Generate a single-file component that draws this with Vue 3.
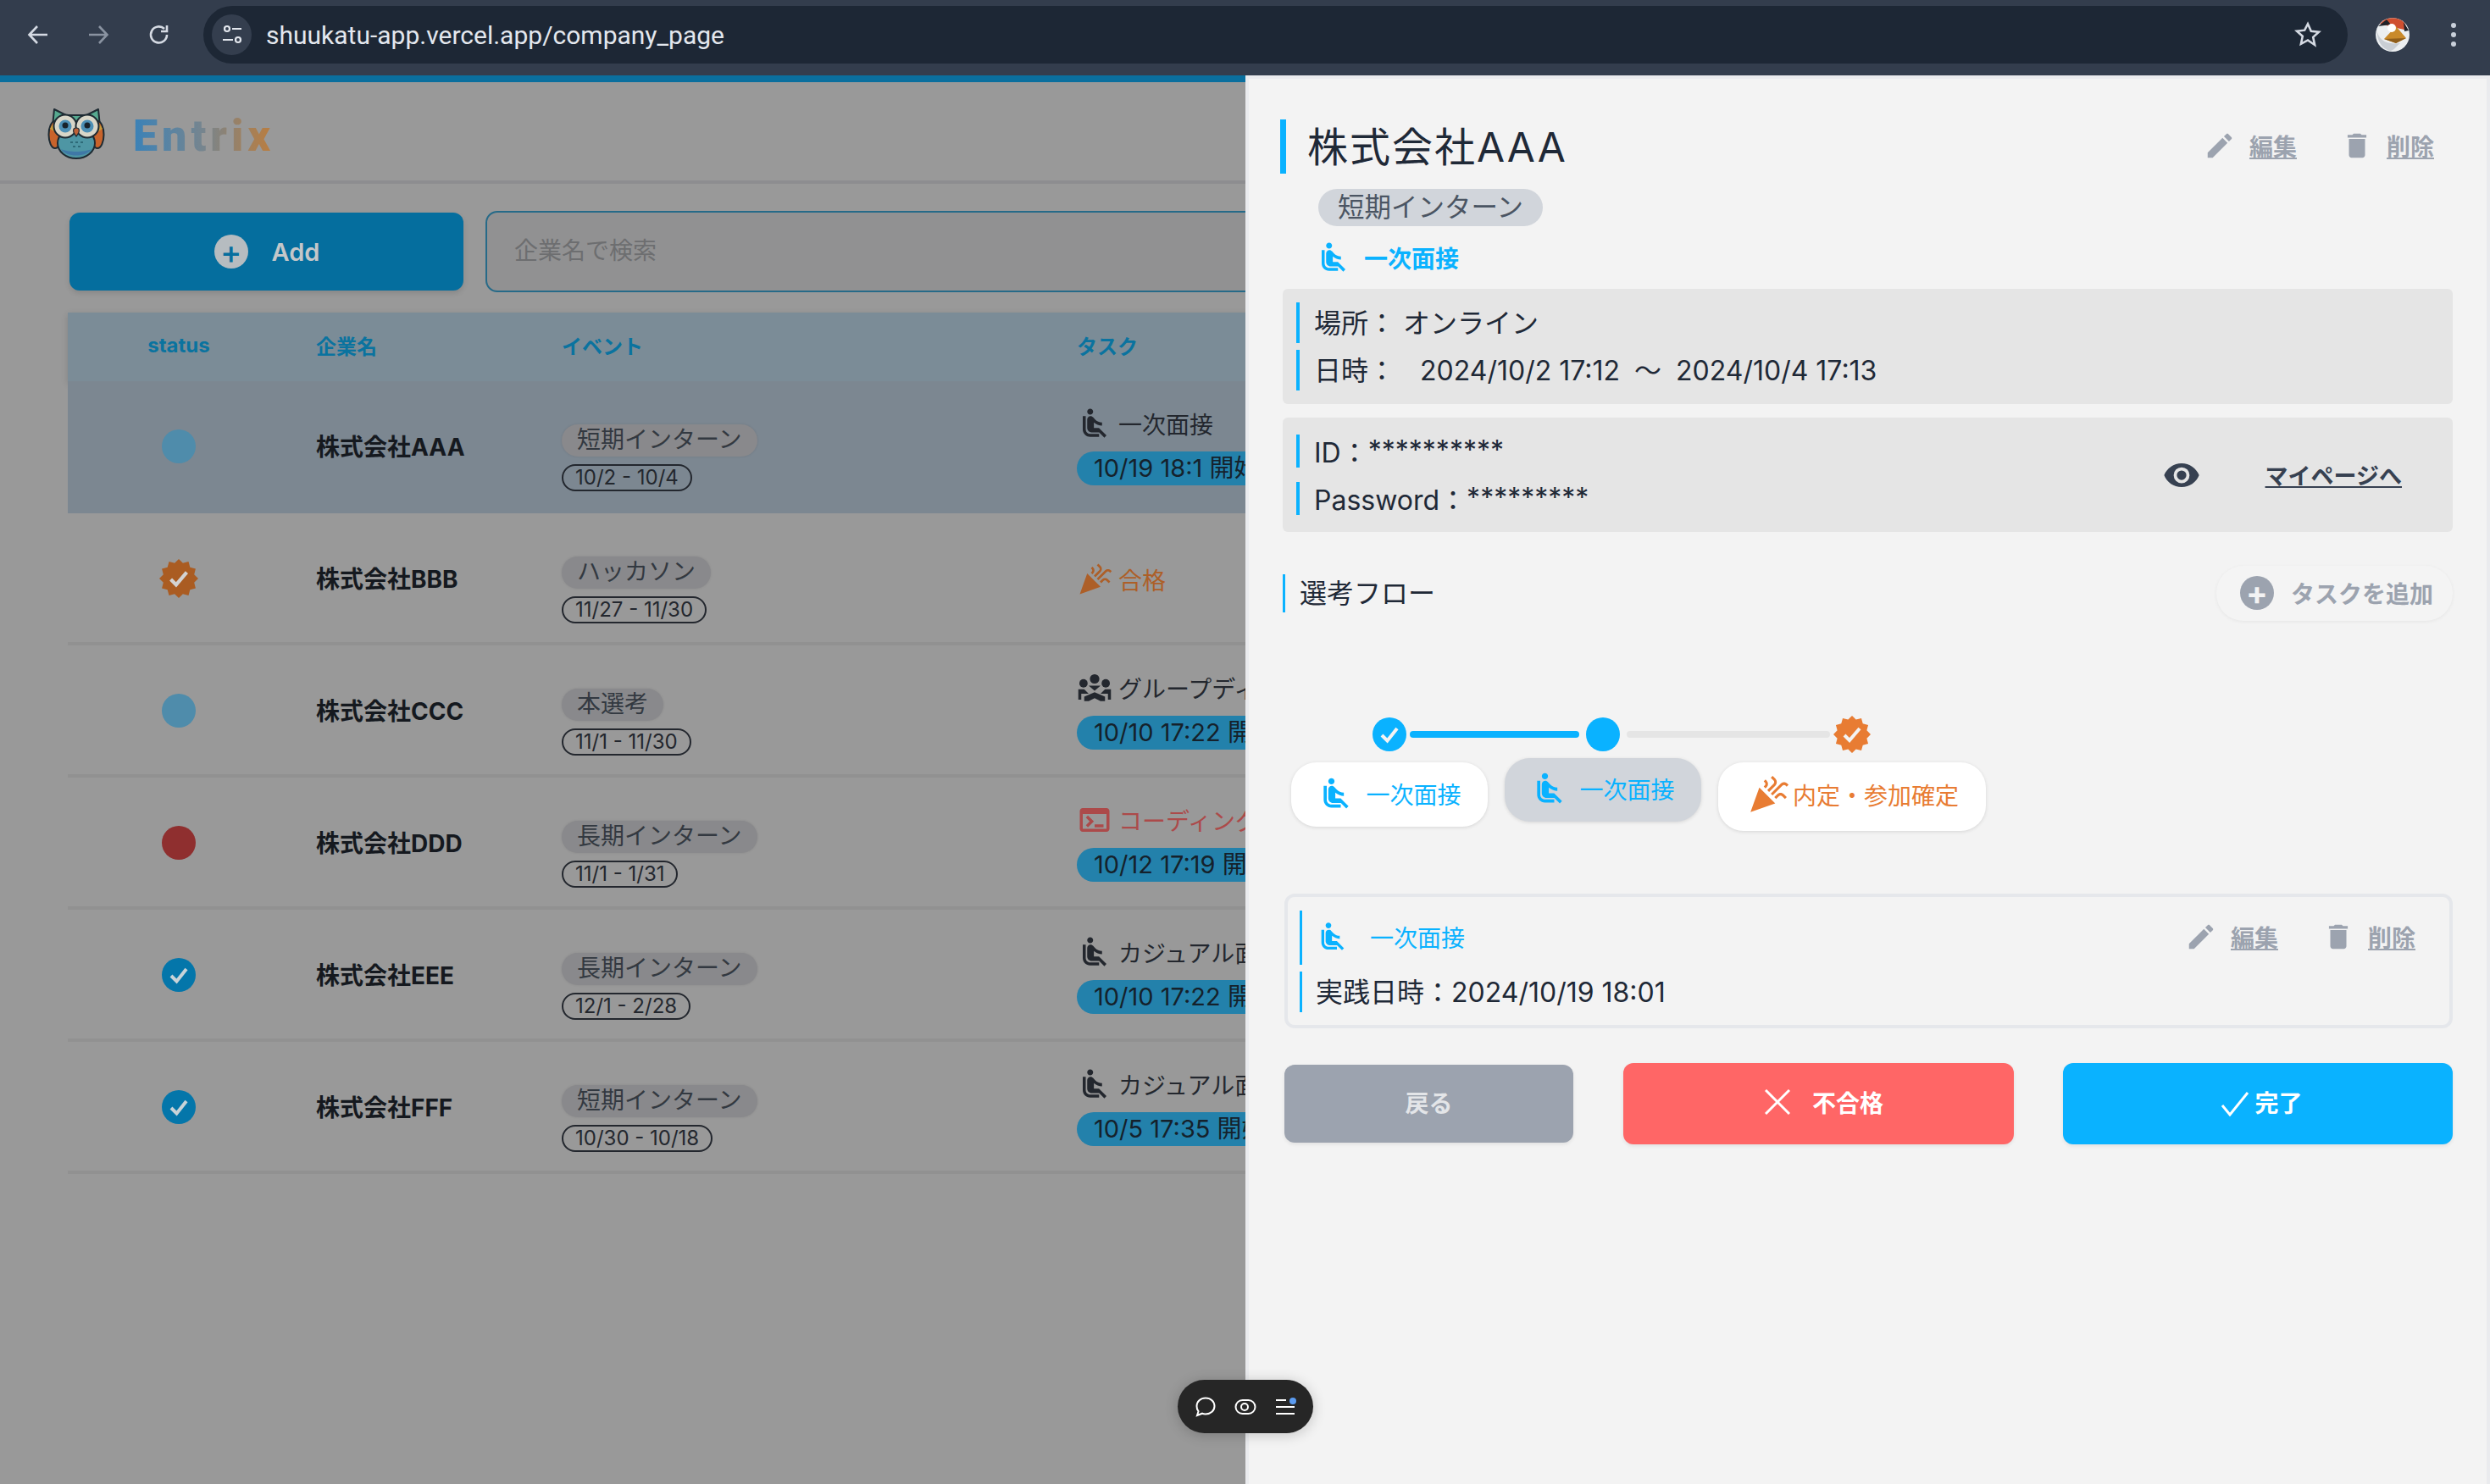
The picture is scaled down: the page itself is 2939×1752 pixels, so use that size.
<template>
  <div class="app">
    <!-- browser bar -->
    <div class="chrome">
      <svg class="nav" viewBox="0 0 26 26" fill="none" stroke="#d5dae3" stroke-width="2.6"><path d="M24 13H3M12 3 2.5 13 12 23" /></svg>
      <svg class="nav forward" viewBox="0 0 26 26" fill="none" stroke="#8a93a1" stroke-width="2.6"><path d="M2 13h21M14 3l9.5 10L14 23" /></svg>
      <svg class="nav reload" viewBox="0 0 26 26" fill="none" stroke="#d5dae3" stroke-width="2.6"><path d="M22 13a9.5 9.5 0 1 1-3-7" /><path d="M22 2v7h-7" /></svg>
      <div class="url-bar">
        <div class="site-icon">
          <svg viewBox="0 0 26 26" fill="none" stroke="#e3e7ee" stroke-width="2.2"><circle cx="7" cy="6" r="3" /><path d="M13 6h11M2 19h12" /><circle cx="20" cy="19" r="3" /></svg>
        </div>
        <span class="url">shuukatu-app.vercel.app/company_page</span>
        <svg class="star" viewBox="0 0 30 30" fill="none" stroke="#d5dae3" stroke-width="2.4"><path d="m15 3 3.6 8 8.6.9-6.4 5.8 1.8 8.5L15 21l-7.6 4.2 1.8-8.5-6.4-5.8 8.6-.9z" /></svg>
      </div>
      <svg class="avatar" viewBox="0 0 40 40">
        <circle cx="20" cy="20" r="20" fill="#eceff1" />
        <path d="M5 7a20 20 0 0 1 29 -1l4 9-13-3z" fill="#cf4f30" />
        <path d="M3 10 13 2l5 6zM33 5l6 10-5 1z" fill="#20232a" />
        <path d="M10 25 24 10l12 14-12 6z" fill="#c98a2b" />
        <path d="M10 25l26-1-12 6z" fill="#8f5e1c" />
        <circle cx="19" cy="12" r="5" fill="#fff" />
        <path d="M1 14c3 12 10 18 28 16-6 5-8 9-12 9C9 37 2 30 1 14z" fill="#c9ced4" />
      </svg>
      <div class="dots"><i></i><i></i><i></i></div>
    </div>

    <div class="body">
      <!-- dimmed company list -->
      <main class="page">
        <header class="brand">
          <svg class="owl" viewBox="0 0 68 62">
            <path d="M8 3 22 10h24l14-7 2 20H6z" fill="#56a98f" stroke="#1e2b33" stroke-width="2" stroke-linejoin="round" />
            <ellipse cx="9" cy="33" rx="7.5" ry="16" fill="#c8632b" stroke="#1e2b33" stroke-width="2" />
            <ellipse cx="59" cy="33" rx="7.5" ry="16" fill="#c8632b" stroke="#1e2b33" stroke-width="2" />
            <path d="M3 26c3-6 6-7 8-6l1 12zM65 26c-3-6-6-7-8-6l-1 12z" fill="#c79a3a" />
            <ellipse cx="34" cy="43" rx="22" ry="18" fill="#4e96a4" stroke="#1e2b33" stroke-width="2" />
            <path d="M16 50c6 10 30 10 36 0-8 4-28 4-36 0z" fill="#3f78a6" />
            <circle cx="21" cy="23" r="13.500" fill="#d8d6c8" stroke="#1e2b33" stroke-width="2" />
            <circle cx="47" cy="23" r="13.500" fill="#d8d6c8" stroke="#1e2b33" stroke-width="2" />
            <circle cx="21" cy="23" r="7.500" fill="#4c8fb5" />
            <circle cx="47" cy="23" r="7.500" fill="#4c8fb5" />
            <circle cx="21" cy="22" r="3.500" fill="#18222b" />
            <circle cx="47" cy="22" r="3.500" fill="#18222b" />
            <path d="M34 25c4 0 5 4 0 10-5-6-4-10 0-10z" fill="#bf6136" stroke="#1e2b33" stroke-width="1.2" />
            <path d="M27 42h3M33 42h3M39 42h3M30 47h3M36 47h3" stroke="#2d6a78" stroke-width="2" />
          </svg>
          <span class="logo-text">Entrix</span>
        </header>

        <div class="toolbar">
          <button class="add-btn">
            <span class="add-plus">+</span>
            <span>Add</span>
          </button>
          <input class="search" placeholder="企業名で検索" />
        </div>

        <section class="table">
          <div class="row head">
            <span class="status-label">status</span>
            <span class="with-pad">企業名</span>
            <span>イベント</span>
            <span>タスク</span>
          </div>
          <div v-for="item in companies" :key="item.name" class="row item" :class="{ selected: item.selected }">
            <div class="status-cell">
              <span v-if="item.status === 'open'" class="dot open"></span>
              <span v-else-if="item.status === 'fail'" class="dot fail"></span>
              <svg v-else-if="item.status === 'done'" class="mark" viewBox="0 0 40 40">
                <circle cx="20" cy="20" r="20" fill="#0476aa" />
                <path d="m11 21 6.5 6.5L29 13" fill="none" stroke="#c8d3d8" stroke-width="4" />
              </svg>
              <svg v-else class="mark seal" viewBox="0 0 44 44">
                <polygon :points="badgePoints" fill="#aa5c22" />
                <path d="m13 23 6 6 12-14" fill="none" stroke="#d3d3d3" stroke-width="4" />
              </svg>
            </div>
            <div class="company with-pad">{{ item.name }}</div>
            <div class="event">
              <span class="event-tag">{{ item.event }}</span>
              <span class="date-pill">{{ item.date }}</span>
            </div>
            <div class="task">
              <div class="task-name" :class="item.tone">
                <svg class="task-icon" viewBox="0 0 24 24" fill="currentColor">
                  <g v-if="item.icon === 'groups'">
                    <circle cx="12" cy="6" r="3.2" /><circle cx="4.5" cy="9" r="2.8" /><circle cx="19.5" cy="9" r="2.8" />
                    <path d="M8 10.5h8L12 14zM1 13h4l3 3H3v4H1zM23 13h-4l-3 3h5v4h2zM5 21v-3l7-3 7 3v3h-3l-4-2-4 2z" />
                  </g>
                  <path v-else :d="icons[item.icon]" />
                </svg>
                <span>{{ item.task }}</span>
              </div>
              <span v-if="item.start" class="start-pill">{{ item.start }}</span>
            </div>
          </div>
        </section>
      </main>

      <!-- detail drawer -->
      <aside class="panel">
        <div class="title-row">
          <h1 class="title">株式会社AAA</h1>
          <div class="actions">
            <a class="action"><svg viewBox="0 0 24 24" fill="currentColor"><path :d="icons.edit" /></svg><span>編集</span></a>
            <a class="action"><svg viewBox="0 0 24 24" fill="currentColor"><path :d="icons.trash" /></svg><span>削除</span></a>
          </div>
        </div>
        <div class="panel-tag">短期インターン</div>
        <div class="current-task">
          <svg viewBox="0 0 24 24" fill="currentColor"><path :d="icons.seat" /></svg>
          <span>一次面接</span>
        </div>

        <div class="info-box">
          <div class="info-line">場所： <span class="online">オンライン</span></div>
          <div class="info-line">日時： <span class="period">2024/10/2 17:12<span class="tilde">～</span>2024/10/4 17:13</span></div>
        </div>

        <div class="info-box account">
          <div class="account-lines">
            <div class="info-line slim">ID：<span class="stars">**********</span></div>
            <div class="info-line slim">Password：<span class="stars">*********</span></div>
          </div>
          <svg class="eye" viewBox="0 0 24 16" fill="currentColor"><path d="M12 .5C7 .5 2.7 3.6 1 8c1.700 4.400 6 7.500 11 7.500s9.300-3.100 11-7.500C21.300 3.600 17 .5 12 .5zM12 13a5 5 0 1 1 0-10 5 5 0 0 1 0 10zm0-8a3 3 0 1 0 0 6 3 3 0 0 0 0-6z" /></svg>
          <a class="mypage">マイページへ</a>
        </div>

        <div class="flow-head">
          <div class="flow-title">選考フロー</div>
          <button class="add-task">
            <span class="task-plus">+</span>
            <span>タスクを追加</span>
          </button>
        </div>

        <div class="track">
          <svg class="step-mark" viewBox="0 0 40 40">
            <circle cx="20" cy="20" r="20" fill="#0ab2ff" />
            <path d="m11 21 6.500 6.500L29 13" fill="none" stroke="#f3f3f3" stroke-width="4" />
          </svg>
          <span class="line active"></span>
          <span class="step-dot"></span>
          <span class="line"></span>
          <svg class="step-badge" viewBox="0 0 44 44">
            <polygon :points="badgePoints" fill="#e87c33" />
            <path d="m13 23 6 6 12-14" fill="none" stroke="#f3f3f3" stroke-width="4" />
          </svg>
        </div>

        <div class="steps">
          <div class="step">
            <svg viewBox="0 0 24 24" fill="currentColor"><path :d="icons.seat" /></svg>
            <span>一次面接</span>
          </div>
          <div class="step current">
            <svg viewBox="0 0 24 24" fill="currentColor"><path :d="icons.seat" /></svg>
            <span>一次面接</span>
          </div>
          <div class="step goal">
            <svg viewBox="0 0 24 24" fill="currentColor"><path :d="icons.party" /></svg>
            <span>内定・参加確定</span>
          </div>
        </div>

        <div class="task-card">
          <div class="card-line top">
            <svg class="card-seat" viewBox="0 0 24 24" fill="currentColor"><path :d="icons.seat" /></svg>
            <span class="card-name">一次面接</span>
            <div class="actions small">
              <a class="action"><svg viewBox="0 0 24 24" fill="currentColor"><path :d="icons.edit" /></svg><span>編集</span></a>
              <a class="action"><svg viewBox="0 0 24 24" fill="currentColor"><path :d="icons.trash" /></svg><span>削除</span></a>
            </div>
          </div>
          <div class="card-line">実践日時：2024/10/19 18:01</div>
        </div>

        <div class="buttons">
          <button class="btn back">戻る</button>
          <button class="btn fail">
            <svg viewBox="0 0 30 30" fill="none" stroke="#fff" stroke-width="3"><path d="m1 1 28 28M29 1 1 29" /></svg>
            <span>不合格</span>
          </button>
          <button class="btn done">
            <svg viewBox="0 0 36 30" fill="none" stroke="#fff" stroke-width="3"><path d="m3 17 9 11L33 2" /></svg>
            <span>完了</span>
          </button>
        </div>
      </aside>

      <!-- floating dev toolbar -->
      <div class="dev-bar">
        <svg viewBox="0 0 26 26" fill="none" stroke="#fff" stroke-width="2"><path d="M13 2.500c6 0 10.500 4 10.500 9.500S19 21.500 13 21.500c-1.500 0-3-.3-4-.8L3 23l1.500-4.800A9.600 9.600 0 0 1 2.500 12C2.500 6.500 7 2.500 13 2.500z" /></svg>
        <svg viewBox="0 0 26 26" fill="none" stroke="#fff" stroke-width="2"><rect x="1.500" y="5" width="23" height="16" rx="8" /><circle cx="12" cy="13" r="4" /></svg>
        <div class="menu-icon">
          <svg viewBox="0 0 26 26" fill="none" stroke="#fff" stroke-width="2"><path d="M2 5h12M2 13h22M2 21h22" /></svg>
          <i></i>
        </div>
      </div>
    </div>
  </div>
</template>

<script setup>
const icons = {
  seat: 'M7.59 5.41c-.78-.78-.78-2.05 0-2.83.78-.78 2.05-.78 2.83 0 .78.78.78 2.05 0 2.83-.79.79-2.05.79-2.83 0zM6 16V7H4v9c0 2.76 2.24 5 5 5h6v-2H9c-1.66 0-3-1.34-3-3zm14 4.07L14.93 15H11.5v-3.68c1.4 1.15 3.6 2.16 5.5 2.16v-2.16c-1.66.02-3.61-.87-4.67-2.04l-1.4-1.55c-.19-.21-.43-.38-.69-.5-.29-.14-.62-.23-.96-.23h-.03C8.01 7 7 8.01 7 9.25V15c0 1.66 1.34 3 3 3h5.07l3.5 3.5L20 20.07z',
  party: 'M2 22l14-5-9-9zM14.53 12.53l5.59-5.59c.49-.49 1.28-.49 1.77 0l.59.59 1.06-1.06-.59-.59c-1.07-1.07-2.82-1.07-3.89 0l-5.59 5.59 1.06 1.06zM10.06 6.88l-.59.59 1.06 1.06.59-.59c1.07-1.07 1.07-2.82 0-3.89l-.59-.59-1.06 1.07.59.59c.48.48.48 1.28 0 1.76zM17.06 11.88l-1.59 1.59 1.06 1.06 1.59-1.59c.49-.49 1.28-.49 1.77 0l1.61 1.61 1.06-1.06-1.61-1.61c-1.08-1.07-2.82-1.07-3.89 0zM15.06 5.88l-3.59 3.59 1.06 1.06 3.59-3.59c1.07-1.07 1.07-2.82 0-3.89l-1.59-1.59-1.06 1.06 1.59 1.59c.48.49.48 1.29 0 1.77z',
  terminal: 'M20 4H4c-1.1 0-2 .9-2 2v12c0 1.1.9 2 2 2h16c1.1 0 2-.9 2-2V6c0-1.1-.9-2-2-2zm0 14H4V8h16v10zm-2-1h-6v-2h6v2zM7.5 17l-1.41-1.41L8.67 13l-2.59-2.59L7.5 9l4 4-4 4z',
  edit: 'M3 17.25V21h3.75L17.81 9.94l-3.75-3.75L3 17.25zM20.71 7.04c.39-.39.39-1.02 0-1.41l-2.34-2.34c-.39-.39-1.02-.39-1.41 0l-1.83 1.83 3.75 3.75 1.83-1.83z',
  trash: 'M6 19c0 1.1.9 2 2 2h8c1.1 0 2-.9 2-2V7H6v12zM19 4h-3.5l-1-1h-5l-1 1H5v2h14V4z',
}

const companies = [
  { name: '株式会社AAA', status: 'open', event: '短期インターン', date: '10/2 - 10/4', icon: 'seat', task: '一次面接', start: '10/19 18:1 開始', selected: true },
  { name: '株式会社BBB', status: 'passed', event: 'ハッカソン', date: '11/27 - 11/30', icon: 'party', task: '合格', tone: 'orange' },
  { name: '株式会社CCC', status: 'open', event: '本選考', date: '11/1 - 11/30', icon: 'groups', task: 'グループディスカッション', start: '10/10 17:22 開始' },
  { name: '株式会社DDD', status: 'fail', event: '長期インターン', date: '11/1 - 1/31', icon: 'terminal', task: 'コーディングテスト', tone: 'red', start: '10/12 17:19 開始' },
  { name: '株式会社EEE', status: 'done', event: '長期インターン', date: '12/1 - 2/28', icon: 'seat', task: 'カジュアル面談', start: '10/10 17:22 開始' },
  { name: '株式会社FFF', status: 'done', event: '短期インターン', date: '10/30 - 10/18', icon: 'seat', task: 'カジュアル面談', start: '10/5 17:35 開始' },
]

// zigzag outline of the "passed" seal
const badgePoints = Array.from({ length: 24 }, (_, i) => {
  const r = i % 2 ? 18 : 22
  const a = (i * Math.PI) / 12 - Math.PI / 2
  return `${(22 + r * Math.cos(a)).toFixed(2)},${(22 + r * Math.sin(a)).toFixed(2)}`
}).join(' ')
</script>

<style>
html,
body {
  margin: 0;
  background: #f3f3f3;
}
</style>

<style scoped>
.app {
  width: 2939px;
  height: 1752px;
  overflow: hidden;
  font-family: Inter, 'Noto Sans CJK JP', sans-serif;
  color: #1f2937;
}

.chrome {
  display: flex;
  align-items: center;
  height: 89px;
  box-sizing: border-box;
  padding-bottom: 7px;
  background: #333d4d;
}
.nav {
  flex: none;
  width: 26px;
  height: 26px;
  margin-left: 32px;
}
.nav.forward {
  margin-left: 45px;
}
.nav.reload {
  margin-left: 46px;
  margin-right: 39px;
}
.url-bar {
  display: flex;
  align-items: center;
  width: 2531px;
  height: 68px;
  box-sizing: border-box;
  padding-left: 10px;
  border-radius: 34px;
  background: #1d2735;
}
.site-icon {
  display: flex;
  align-items: center;
  justify-content: center;
  width: 47px;
  height: 48px;
  border-radius: 50%;
  background: #343e4e;
}
.site-icon svg {
  width: 26px;
  height: 26px;
}
.url {
  margin-left: 17px;
  font-family: Roboto, sans-serif;
  font-size: 30px;
  color: #e3e7ee;
}
.star {
  width: 32px;
  height: 32px;
  margin-left: auto;
  margin-right: 31px;
}
.avatar {
  flex: none;
  width: 40px;
  height: 40px;
  margin-left: 33px;
}
.dots {
  display: flex;
  flex-direction: column;
  gap: 5px;
  margin-left: 49px;
}
.dots i {
  width: 6px;
  height: 6px;
  border-radius: 50%;
  background: #c9d0da;
}

.body {
  position: relative;
  display: flex;
  height: 1663px;
}

.page {
  flex: none;
  width: 1470px;
  overflow: hidden;
  box-sizing: border-box;
  border-top: 8px solid #0a6f9e;
  background: #999999;
}
.brand {
  display: flex;
  align-items: center;
  box-sizing: border-box;
  height: 120px;
  padding-left: 56px;
  padding-top: 4px;
  border-bottom: 4px solid #8d8d90;
}
.owl {
  width: 68px;
  height: 62px;
}
.logo-text {
  margin-left: 33px;
  margin-top: 6px;
  font-family: Roboto, sans-serif;
  font-size: 52px;
  font-weight: 900;
  letter-spacing: 5px;
  background: linear-gradient(90deg, #3a82b8, #77858e 50%, #bd7d3c);
  -webkit-background-clip: text;
  background-clip: text;
  color: transparent;
}

.toolbar {
  display: flex;
  align-items: center;
  gap: 26px;
  height: 96px;
  margin-top: 32px;
  padding-left: 82px;
}
.add-btn {
  display: flex;
  flex: none;
  align-items: center;
  justify-content: center;
  gap: 28px;
  width: 465px;
  height: 92px;
  padding-left: 7px;
  border: none;
  border-radius: 12px;
  background: #056e9e;
  box-shadow: 0 3px 6px rgba(0, 0, 0, 0.12);
  font-family: inherit;
  font-size: 29px;
  font-weight: 600;
  color: #c4c7c9;
}
.add-plus {
  display: flex;
  align-items: center;
  justify-content: center;
  width: 40px;
  height: 40px;
  border-radius: 50%;
  background: #b6bcc0;
  font-size: 38px;
  font-weight: 500;
  line-height: 1;
  color: #056e9e;
}
.search {
  flex: none;
  width: 1200px;
  height: 96px;
  box-sizing: border-box;
  padding: 0 32px 2px;
  border: 2.500px solid #266a88;
  border-radius: 14px;
  background: #919192;
  font-family: inherit;
  font-size: 28px;
}
.search::placeholder {
  color: #6d6e70;
}

.table {
  width: 1900px;
  margin-top: 24px;
  margin-left: 80px;
}
.row {
  display: grid;
  grid-template-columns: 262px 321px 608px 1fr;
  align-items: center;
}
.row.head {
  box-sizing: border-box;
  height: 81px;
  padding-bottom: 4px;
  background: #7b8c97;
  font-size: 24px;
  font-weight: 700;
  color: #0a739f;
  box-shadow: 0 3px 8px rgba(0, 0, 0, 0.15);
}
.status-label {
  text-align: center;
}
.with-pad {
  padding-left: 31px;
}
.row.item {
  height: 152px;
  border-bottom: 4px solid #919191;
}
.row.item.selected {
  background: #7c8791;
  border-bottom-color: #7c8791;
}
.status-cell {
  display: flex;
  justify-content: center;
  margin-top: 1px;
}
.dot {
  width: 40px;
  height: 40px;
  border-radius: 50%;
}
.dot.open {
  background: #4f8cab;
}
.dot.fail {
  background: #8f2f2f;
}
.mark {
  width: 40px;
  height: 40px;
}
.mark.seal {
  width: 46px;
  height: 46px;
}
.company {
  font-size: 28px;
  font-weight: 700;
  color: #15191f;
}
.event {
  display: flex;
  flex-direction: column;
  align-items: flex-start;
  gap: 9px;
  margin-top: 28px;
}
.event-tag {
  display: block;
  box-sizing: border-box;
  height: 38px;
  padding: 0 18px;
  border-radius: 19px;
  background: #89898c;
  box-shadow: 0 0 3px rgba(0, 0, 0, 0.1);
  font-size: 28px;
  line-height: 36px;
  color: #333941;
}
.date-pill {
  display: block;
  box-sizing: border-box;
  height: 32px;
  padding: 0 14px;
  border: 2.500px solid #23272e;
  border-radius: 16px;
  font-size: 24px;
  line-height: 27px;
  color: #23272e;
}
.task {
  display: flex;
  flex-direction: column;
  align-items: flex-start;
  gap: 15px;
  margin-top: 3px;
  white-space: nowrap;
}
.task-name {
  display: flex;
  align-items: center;
  gap: 7px;
  height: 36px;
  font-size: 28px;
  color: #23272e;
}
.task-name.orange {
  color: #ad5f28;
}
.task-name.red {
  color: #ac4a4a;
}
.task-icon {
  width: 42px;
  height: 42px;
}
.start-pill {
  height: 40px;
  padding: 0 20px;
  border-radius: 20px;
  background: #2381ab;
  font-size: 29px;
  line-height: 40px;
  color: #15212b;
}

.panel {
  flex: 1;
  box-sizing: border-box;
  padding: 48px 40px 0;
  border: 4px solid #eaebee;
  border-bottom: none;
  background: #f3f3f3;
}
.title-row {
  display: flex;
  align-items: center;
  justify-content: space-between;
  box-sizing: border-box;
  height: 64px;
  margin-left: -3px;
  border-left: 7px solid #0ab2ff;
}
.title {
  margin: 0 0 6px;
  padding-left: 25px;
  font-size: 48px;
  font-weight: 400;
  letter-spacing: 2px;
  color: #1f2937;
}
.actions {
  display: flex;
  gap: 52px;
  margin-right: 22px;
  margin-bottom: 2px;
}
.action {
  display: flex;
  align-items: center;
  gap: 16px;
  font-size: 28px;
  font-weight: 700;
  color: #9ca3af;
}
.action svg {
  width: 38px;
  height: 38px;
}
.action span {
  text-decoration: underline;
}
.panel-tag {
  width: fit-content;
  height: 44px;
  margin-top: 18px;
  margin-left: 42px;
  padding: 0 23px;
  border-radius: 22px;
  background: #d1d5db;
  font-size: 31.500px;
  line-height: 44px;
  color: #4b5563;
}
.current-task {
  display: flex;
  align-items: center;
  gap: 15px;
  height: 36px;
  margin-top: 19px;
  margin-left: 39px;
  font-size: 28px;
  font-weight: 700;
  color: #0ab2ff;
}
.current-task svg {
  width: 42px;
  height: 42px;
}
.info-box {
  box-sizing: border-box;
  height: 136px;
  margin-top: 19px;
  padding: 16px;
  border-radius: 6px;
  background: #e5e5e5;
}
.info-line {
  display: flex;
  align-items: center;
  box-sizing: border-box;
  height: 48px;
  margin-bottom: 8px;
  padding-left: 17px;
  padding-bottom: 4px;
  border-left: 4px solid #0ab2ff;
  font-size: 32px;
  color: #1f2937;
  white-space: pre;
}
.online {
  margin-left: 0;
}
.period {
  margin-left: 20px;
}
.tilde {
  margin: 0 17px;
}
.account {
  display: flex;
  align-items: center;
  height: 135px;
  margin-top: 16px;
  padding: 20px 16px;
}
.account-lines {
  flex: 1;
}
.info-line.slim {
  height: 39px;
  margin-bottom: 17px;
  padding-bottom: 2px;
}
.info-line.slim:last-child {
  margin-bottom: 0;
}
.stars {
  position: relative;
  top: 0;
}
.eye {
  width: 46px;
  height: 30px;
  color: #374151;
}
.mypage {
  margin-left: 76px;
  margin-right: 44px;
  font-size: 27px;
  font-weight: 700;
  text-decoration: underline;
  color: #374151;
}
.flow-head {
  display: flex;
  align-items: center;
  justify-content: space-between;
  height: 65px;
  margin-top: 40px;
}
.flow-title {
  height: 45px;
  padding-left: 17px;
  border-left: 3px solid #0ab2ff;
  font-size: 32px;
  line-height: 45px;
}
.add-task {
  display: flex;
  align-items: center;
  gap: 20px;
  width: 279px;
  height: 65px;
  padding: 0 0 2px 28px;
  border: none;
  border-radius: 32px;
  background: #f4f4f4;
  box-shadow: 0 1px 4px rgba(0, 0, 0, 0.06);
  font-family: inherit;
  font-size: 28px;
  font-weight: 700;
  color: #9ca3af;
}
.task-plus {
  display: flex;
  align-items: center;
  justify-content: center;
  width: 40px;
  height: 40px;
  border-radius: 50%;
  background: #9ca3af;
  font-size: 38px;
  line-height: 1;
  color: #f3f3f3;
}

.track {
  display: flex;
  align-items: center;
  gap: 4px;
  height: 42px;
  margin-top: 113px;
  padding-left: 106px;
}
.step-mark,
.step-dot {
  width: 40px;
  height: 40px;
}
.step-dot {
  border-radius: 50%;
  background: #0ab2ff;
  margin: 0 4px;
}
.step-badge {
  width: 44px;
  height: 44px;
}
.line {
  width: 240px;
  height: 8px;
  border-radius: 4px;
  background: #e5e5e5;
}
.line.active {
  width: 200px;
  background: #0ab2ff;
}
.steps {
  display: flex;
  align-items: flex-start;
  gap: 20px;
  margin-top: 7px;
  margin-left: 10px;
}
.step {
  display: flex;
  align-items: center;
  justify-content: center;
  gap: 13px;
  box-sizing: border-box;
  width: 232px;
  height: 76px;
  margin-top: 5px;
  padding-bottom: 3px;
  border-radius: 30px;
  background: #ffffff;
  box-shadow: 0 1px 4px rgba(0, 0, 0, 0.12);
  font-size: 28px;
  color: #0ab2ff;
}
.step svg {
  width: 44px;
  height: 44px;
}
.step.current {
  margin-top: 0;
  height: 75px;
  background: #d1d5db;
}
.step.goal {
  width: 316px;
  height: 81px;
  gap: 4px;
  padding-bottom: 5px;
  padding-left: 2px;
  color: #e87c33;
}
.step.goal svg {
  width: 50px;
  height: 50px;
}

.task-card {
  box-sizing: border-box;
  width: 1379px;
  height: 159px;
  margin-top: 74px;
  margin-left: 2px;
  padding: 16px 14px;
  border: 4px solid #e5e7eb;
  border-radius: 12px;
}
.card-line {
  display: flex;
  align-items: center;
  box-sizing: border-box;
  height: 48px;
  margin-top: 8px;
  padding-left: 16px;
  padding-bottom: 4px;
  border-left: 3px solid #0ab2ff;
  font-size: 32px;
  color: #1f2937;
}
.card-line.top {
  height: 64px;
  margin-top: 0;
  padding-left: 16px;
  padding-bottom: 2px;
}
.card-seat {
  width: 40px;
  height: 40px;
  color: #0ab2ff;
}
.card-name {
  margin-left: 24px;
  font-size: 28px;
  color: #0ab2ff;
}
.actions.small {
  margin-left: auto;
  margin-right: 26px;
  margin-bottom: 0;
}
.buttons {
  display: flex;
  align-items: center;
  justify-content: space-between;
  margin-top: 41px;
  margin-left: 2px;
}
.btn {
  display: flex;
  align-items: center;
  justify-content: center;
  height: 96px;
  padding: 0 0 4px;
  border: none;
  border-radius: 12px;
  box-shadow: 0 2px 4px rgba(0, 0, 0, 0.08);
  font-family: inherit;
  font-size: 28px;
  font-weight: 700;
  color: #ffffff;
}
.btn.back {
  width: 341px;
  height: 92px;
  background: #9ca3af;
  color: #e3e5e8;
}
.btn.fail {
  gap: 26px;
  width: 461px;
  padding-left: 14px;
  background: #ff6666;
}
.btn.fail svg {
  width: 30px;
  height: 30px;
}
.btn.done {
  gap: 5px;
  width: 460px;
  padding-left: 8px;
  background: #0ab2ff;
}
.btn.done svg {
  width: 36px;
  height: 30px;
  margin-top: 4px;
}

.dev-bar {
  position: absolute;
  left: 1390px;
  top: 1540px;
  display: flex;
  align-items: center;
  justify-content: space-between;
  box-sizing: border-box;
  width: 160px;
  height: 63px;
  padding: 0 20px;
  border-radius: 32px;
  background: #262626;
  box-shadow: 0 2px 16px rgba(0, 0, 0, 0.2);
}
.dev-bar svg {
  display: block;
  width: 26px;
  height: 26px;
}
.menu-icon {
  position: relative;
}
.menu-icon i {
  position: absolute;
  top: 2px;
  right: 0;
  width: 8px;
  height: 8px;
  border-radius: 50%;
  background: #5b9bf0;
}
</style>
